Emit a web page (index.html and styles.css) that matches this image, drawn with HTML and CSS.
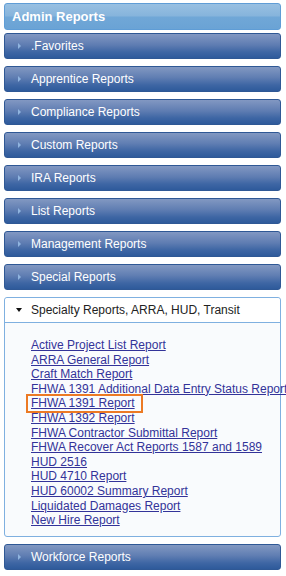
FILE: index.html
```html
<!DOCTYPE html>
<html lang="en">

<head>
    <meta charset="UTF-8" />
    <meta name="viewport" content="width=device-width, initial-scale=1.0" />
    <title>Admin Reports</title>
    <link rel="stylesheet" href="styles.css">
</head>

<body>
    <div class="reports">
        <!-- Title -->
        <div class="reports-title">Admin Reports</div>

        <!-- Collapsed groups -->
        <div class="group"><span class="arrow"></span>.Favorites</div>
        <div class="group"><span class="arrow"></span>Apprentice Reports</div>
        <div class="group"><span class="arrow"></span>Compliance Reports</div>
        <div class="group"><span class="arrow"></span>Custom Reports</div>
        <div class="group"><span class="arrow"></span>IRA Reports</div>
        <div class="group"><span class="arrow"></span>List Reports</div>
        <div class="group"><span class="arrow"></span>Management Reports</div>
        <div class="group"><span class="arrow"></span>Special Reports</div>

        <!-- Open group -->
        <div class="panel">
            <div class="panel-header"><span class="arrow-down"></span>Specialty Reports, ARRA, HUD, Transit</div>
            <div class="panel-body">
                <a href="#">Active Project List Report</a>
                <a href="#">ARRA General Report</a>
                <a href="#">Craft Match Report</a>
                <a href="#">FHWA 1391 Additional Data Entry Status Report</a>
                <a href="#" class="selected">FHWA 1391 Report</a>
                <a href="#">FHWA 1392 Report</a>
                <a href="#">FHWA Contractor Submittal Report</a>
                <a href="#">FHWA Recover Act Reports 1587 and 1589</a>
                <a href="#">HUD 2516</a>
                <a href="#">HUD 4710 Report</a>
                <a href="#">HUD 60002 Summary Report</a>
                <a href="#">Liquidated Damages Report</a>
                <a href="#">New Hire Report</a>
            </div>
        </div>

        <div class="group"><span class="arrow"></span>Workforce Reports</div>
    </div>
</body>

</html>
```

FILE: styles.css
```css
body {
    font-family: Arial, "Liberation Sans", sans-serif;
    background-color: #ffffff;
    margin: 0;
    padding: 0;
}

.reports {
    padding: 3px 5px 0 4px;
    display: flex;
    flex-direction: column;
    gap: 7px;
}

.reports-title {
    height: 25px;
    line-height: 25px;
    padding-left: 7px;
    color: white;
    font-size: 13px;
    font-weight: bold;
    border: 1px solid #5f9dd6;
    border-radius: 3px;
    background: linear-gradient(to bottom, #98c0e2 0%, #86b4dc 48%, #70a7d7 52%, #6aa3d5 100%);
    margin-bottom: -4px;
}

.group {
    height: 24px;
    color: white;
    font-size: 12px;
    border: 1px solid #2f5895;
    border-radius: 3px;
    background: linear-gradient(to bottom, #8298c2 0%, #5f7db2 45%, #3e66a4 75%, #2e5a9b 100%);
    display: flex;
    align-items: center;
}

.arrow {
    width: 0;
    height: 0;
    border-top: 3px solid transparent;
    border-bottom: 3px solid transparent;
    border-left: 3px solid #8fb4df;
    margin: 0 10px 0 13px;
}

.panel {
    border: 1px solid #7fb0e0;
    border-radius: 3px;
    background: #f9fbfd;
}

.panel-header {
    height: 24px;
    font-size: 12px;
    color: #222;
    background: #ffffff;
    border-bottom: 1px solid #7fb0e0;
    border-radius: 3px 3px 0 0;
    display: flex;
    align-items: center;
}

.arrow-down {
    width: 0;
    height: 0;
    border-left: 3px solid transparent;
    border-right: 3px solid transparent;
    border-top: 4px solid #111;
    margin: 0 9px 0 11px;
}

.panel-body {
    display: flex;
    flex-direction: column;
    align-items: flex-start;
    padding: 15px 0 8px 21px;
}

.panel-body a {
    font-size: 12px;
    line-height: 14.6px;
    white-space: nowrap;
    color: #333399;
    text-decoration: underline;
    border: 2px solid transparent;
    padding: 0 6px 0 3px;
    margin: -2px 0;
}

.panel-body a.selected {
    border-color: #ec7a24;
}
```
